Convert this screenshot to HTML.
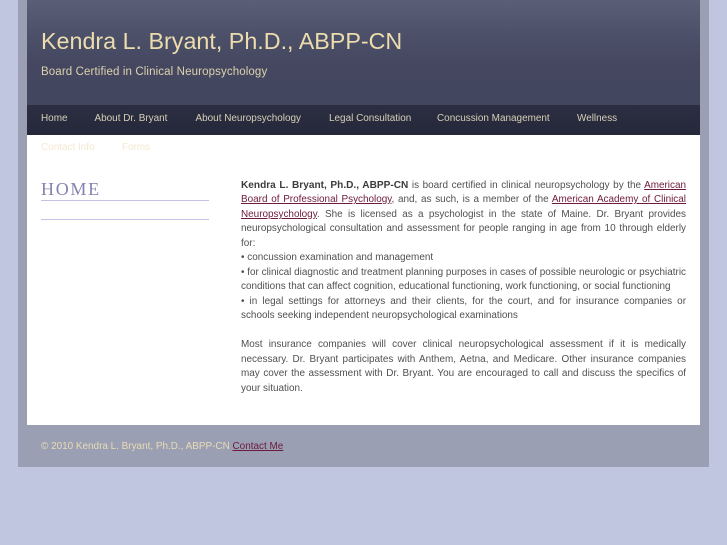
<!DOCTYPE html>
<html>
<head>
<meta charset="utf-8">
<style>
html,body{margin:0;padding:0;}
body{width:727px;height:545px;background:#c1c6e0;overflow:hidden;position:relative;font-family:"Liberation Sans",sans-serif;}
.abs{position:absolute;white-space:nowrap;}
#outer{position:absolute;left:18px;top:0;width:691px;height:467px;background:#9a9fb3;}
#head{position:absolute;left:27px;top:0;width:673px;height:105px;background:linear-gradient(#5a5e76 0,#4c5069 35px,#44475f 65px,#42465f 105px);}
#nav{position:absolute;left:27px;top:105px;width:673px;height:30px;background:linear-gradient(#2c2f41,#25283a);}
#main{position:absolute;left:27px;top:135px;width:673px;height:290px;background:#fff;}
.n{font-size:9.95px;line-height:14px;top:112px;color:#d6cfb8;}
.n2{font-size:9.95px;line-height:14px;top:141px;color:#f5e8d0;}
.l{position:absolute;left:241px;width:445px;font-size:9.93px;line-height:14px;color:#505050;text-align:justify;text-align-last:justify;white-space:nowrap;}
.e{text-align-last:left;}
.l b{color:#3c3c3c;font-size:10.1px;}
a{color:#6d1a3c;text-decoration:underline;}
</style>
</head>
<body>
<div id="outer"></div>
<div id="head"></div>
<div id="nav"></div>
<div id="main"></div>
<div class="abs" style="left:41px;top:27px;font-size:23.3px;line-height:28px;color:#ecdcae;">Kendra L. Bryant, Ph.D., ABPP-CN</div>
<div class="abs" style="left:41px;top:65px;font-size:11.5px;line-height:15px;color:#dcd2ae;letter-spacing:.12px;">Board Certified in Clinical Neuropsychology</div>
<div class="abs n" style="left:41px;">Home</div>
<div class="abs n" style="left:94.5px;">About Dr. Bryant</div>
<div class="abs n" style="left:195.5px;">About Neuropsychology</div>
<div class="abs n" style="left:329px;">Legal Consultation</div>
<div class="abs n" style="left:437px;">Concussion Management</div>
<div class="abs n" style="left:577px;">Wellness</div>
<div class="abs n2" style="left:41px;">Contact Info</div>
<div class="abs n2" style="left:122px;">Forms</div>
<div class="abs" style="left:41px;top:178.5px;font-family:'Liberation Serif',serif;font-size:18px;line-height:20px;letter-spacing:1.7px;color:#8583ad;">HOME</div>
<div style="position:absolute;left:41px;top:200px;width:168px;height:1px;background:#c5c3e4;"></div>
<div style="position:absolute;left:41px;top:219px;width:168px;height:1px;background:#c5c3e4;"></div>
<div class="l" style="top:179px;"><b>Kendra L. Bryant, Ph.D., ABPP-CN</b> is board certified in clinical neuropsychology by the <a>American</a></div>
<div class="l" style="top:193px;"><a>Board of Professional Psychology</a>, and, as such, is a member of the <a>American Academy of Clinical</a></div>
<div class="l" style="top:208px;"><a>Neuropsychology</a>. She is licensed as a psychologist in the state of Maine. Dr. Bryant provides</div>
<div class="l" style="top:222px;">neuropsychological consultation and assessment for people ranging in age from 10 through elderly</div>
<div class="l e" style="top:237px;">for:</div>
<div class="l e" style="top:251px;">• concussion examination and management</div>
<div class="l" style="top:266px;">• for clinical diagnostic and treatment planning purposes in cases of possible neurologic or psychiatric</div>
<div class="l e" style="top:280px;">conditions that can affect cognition, educational functioning, work functioning, or social functioning</div>
<div class="l" style="top:295px;">• in legal settings for attorneys and their clients, for the court, and for insurance companies or</div>
<div class="l e" style="top:309px;">schools seeking independent neuropsychological examinations</div>
<div class="l" style="top:338px;">Most insurance companies will cover clinical neuropsychological assessment if it is medically</div>
<div class="l" style="top:353px;">necessary. Dr. Bryant participates with Anthem, Aetna, and Medicare. Other insurance companies</div>
<div class="l" style="top:367px;">may cover the assessment with Dr. Bryant. You are encouraged to call and discuss the specifics of</div>
<div class="l e" style="top:382px;">your situation.</div>
<div class="abs" style="left:41px;top:440px;font-size:9.93px;line-height:14px;color:#e8dcb4;">© 2010 Kendra L. Bryant, Ph.D., ABPP-CN <a>Contact Me</a></div>
</body>
</html>
